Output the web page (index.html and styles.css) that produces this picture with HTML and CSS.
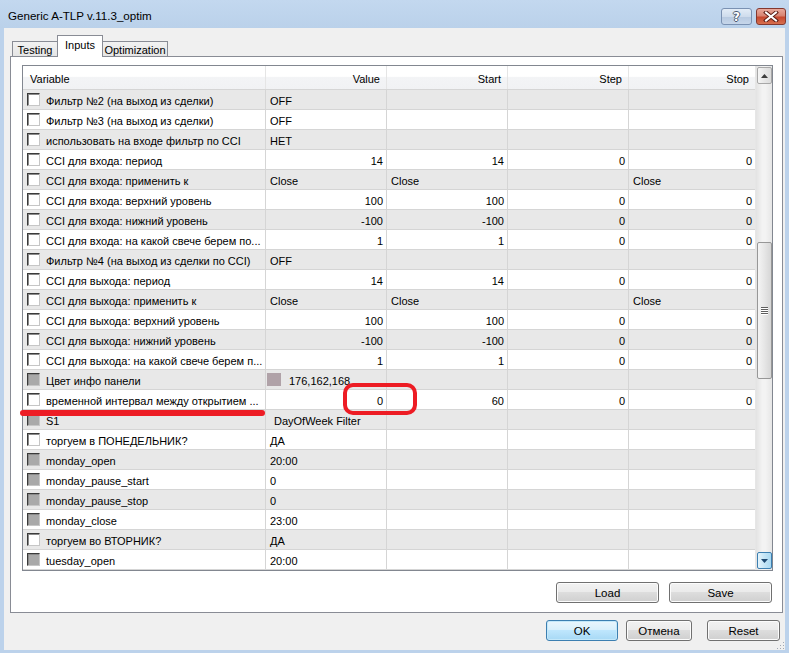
FILE: index.html
```html
<!DOCTYPE html>
<html>
<head>
<meta charset="utf-8">
<link rel="stylesheet" href="styles.css">
</head>
<body>
<div class="window">
  <div class="titlebar">
    <span class="title">Generic A-TLP v.11.3_optim</span>
    <div class="cap-btns">
      <div class="cap help">?</div>
      <div class="cap close">
        <svg width="16" height="11" viewBox="0 0 16 11"><path d="M3 1.5 L13 9.5 M13 1.5 L3 9.5" stroke="#5a1c14" stroke-width="4" stroke-linecap="square"/><path d="M3 1.5 L13 9.5 M13 1.5 L3 9.5" stroke="#fff" stroke-width="2" stroke-linecap="square"/></svg>
      </div>
    </div>
  </div>
  <div class="client">
    <div class="tabs">
      <div class="tab">Testing</div>
      <div class="tab sel">Inputs</div>
      <div class="tab">Optimization</div>
    </div>
    <div class="panel">
      <div class="grid">
        <div class="grid-main">
          <div class="row hdr">
            <div class="c">Variable</div>
            <div class="c n">Value</div>
            <div class="c n">Start</div>
            <div class="c n">Step</div>
            <div class="c n">Stop</div>
          </div>
          <div class="row odd"><div class="c var"><span class="cb"></span>Фильтр №2 (на выход из сделки)</div><div class="c t">OFF</div><div class="c"></div><div class="c"></div><div class="c"></div></div>
          <div class="row"><div class="c var"><span class="cb"></span>Фильтр №3 (на выход из сделки)</div><div class="c t">OFF</div><div class="c"></div><div class="c"></div><div class="c"></div></div>
          <div class="row odd"><div class="c var"><span class="cb"></span>использовать на входе фильтр по CCI</div><div class="c t">НЕТ</div><div class="c"></div><div class="c"></div><div class="c"></div></div>
          <div class="row"><div class="c var"><span class="cb"></span>CCI для входа: период</div><div class="c n">14</div><div class="c n">14</div><div class="c n">0</div><div class="c n">0</div></div>
          <div class="row odd"><div class="c var"><span class="cb"></span>CCI для входа: применить к</div><div class="c t">Close</div><div class="c t">Close</div><div class="c"></div><div class="c t">Close</div></div>
          <div class="row"><div class="c var"><span class="cb"></span>CCI для входа: верхний уровень</div><div class="c n">100</div><div class="c n">100</div><div class="c n">0</div><div class="c n">0</div></div>
          <div class="row odd"><div class="c var"><span class="cb"></span>CCI для входа: нижний уровень</div><div class="c n">-100</div><div class="c n">-100</div><div class="c n">0</div><div class="c n">0</div></div>
          <div class="row"><div class="c var"><span class="cb"></span>CCI для входа: на какой свече берем по...</div><div class="c n">1</div><div class="c n">1</div><div class="c n">0</div><div class="c n">0</div></div>
          <div class="row odd"><div class="c var"><span class="cb"></span>Фильтр №4 (на выход из сделки по CCI)</div><div class="c t">OFF</div><div class="c"></div><div class="c"></div><div class="c"></div></div>
          <div class="row"><div class="c var"><span class="cb"></span>CCI для выхода: период</div><div class="c n">14</div><div class="c n">14</div><div class="c n">0</div><div class="c n">0</div></div>
          <div class="row odd"><div class="c var"><span class="cb"></span>CCI для выхода: применить к</div><div class="c t">Close</div><div class="c t">Close</div><div class="c"></div><div class="c t">Close</div></div>
          <div class="row"><div class="c var"><span class="cb"></span>CCI для выхода: верхний уровень</div><div class="c n">100</div><div class="c n">100</div><div class="c n">0</div><div class="c n">0</div></div>
          <div class="row odd"><div class="c var"><span class="cb"></span>CCI для выхода: нижний уровень</div><div class="c n">-100</div><div class="c n">-100</div><div class="c n">0</div><div class="c n">0</div></div>
          <div class="row"><div class="c var"><span class="cb"></span>CCI для выхода: на какой свече берем п...</div><div class="c n">1</div><div class="c n">1</div><div class="c n">0</div><div class="c n">0</div></div>
          <div class="row odd"><div class="c var"><span class="cb dis"></span>Цвет инфо панели</div><div class="c t sw-cell"><span class="swatch"></span>176,162,168</div><div class="c"></div><div class="c"></div><div class="c"></div></div>
          <div class="row"><div class="c var"><span class="cb"></span>временной интервал между открытием ...</div><div class="c n">0</div><div class="c n">60</div><div class="c n">0</div><div class="c n">0</div></div>
          <div class="row odd"><div class="c var"><span class="cb dis"></span>S1</div><div class="c t wide">DayOfWeek Filter</div><div class="c"></div><div class="c"></div><div class="c"></div></div>
          <div class="row"><div class="c var"><span class="cb"></span>торгуем в ПОНЕДЕЛЬНИК?</div><div class="c t">ДА</div><div class="c"></div><div class="c"></div><div class="c"></div></div>
          <div class="row odd"><div class="c var"><span class="cb dis"></span>monday_open</div><div class="c t">20:00</div><div class="c"></div><div class="c"></div><div class="c"></div></div>
          <div class="row"><div class="c var"><span class="cb dis"></span>monday_pause_start</div><div class="c t">0</div><div class="c"></div><div class="c"></div><div class="c"></div></div>
          <div class="row odd"><div class="c var"><span class="cb dis"></span>monday_pause_stop</div><div class="c t">0</div><div class="c"></div><div class="c"></div><div class="c"></div></div>
          <div class="row"><div class="c var"><span class="cb dis"></span>monday_close</div><div class="c t">23:00</div><div class="c"></div><div class="c"></div><div class="c"></div></div>
          <div class="row odd"><div class="c var"><span class="cb"></span>торгуем во ВТОРНИК?</div><div class="c t">ДА</div><div class="c"></div><div class="c"></div><div class="c"></div></div>
          <div class="row"><div class="c var"><span class="cb dis"></span>tuesday_open</div><div class="c t">20:00</div><div class="c"></div><div class="c"></div><div class="c"></div></div>
        </div>
        <div class="vscroll">
          <div class="sb-btn"><svg width="7" height="4" viewBox="0 0 7 4"><path d="M0 4 L3.5 0 L7 4 Z" fill="#3d3d3d"/></svg></div>
          <div class="thumb"><span class="grip"></span><span class="grip"></span><span class="grip"></span><span class="grip"></span></div>
          <div class="sb-btn down"><svg width="7" height="4" viewBox="0 0 7 4"><path d="M0 0 L7 0 L3.5 4 Z" fill="#1f4a72"/></svg></div>
        </div>
      </div>
      <div class="panel-btns">
        <div class="btn w102">Load</div>
        <div class="btn w102">Save</div>
      </div>
    </div>
    <div class="dlg-btns">
      <div class="btn def ok">OK</div>
      <div class="btn cancel">Отмена</div>
      <div class="btn reset">Reset</div>
    </div>
    <svg class="grip-corner" width="10" height="10" viewBox="0 0 10 10">
      <rect x="8" y="2" width="1" height="1" fill="#a0a8b4"/>
      <rect x="5" y="5" width="1" height="1" fill="#a0a8b4"/>
      <rect x="8" y="5" width="1" height="1" fill="#a0a8b4"/>
      <rect x="2" y="8" width="1" height="1" fill="#a0a8b4"/>
      <rect x="5" y="8" width="1" height="1" fill="#a0a8b4"/>
      <rect x="8" y="8" width="1" height="1" fill="#a0a8b4"/>
    </svg>
  </div>
  <svg class="annot" width="789" height="653" viewBox="0 0 789 653">
    <path d="M23 413 L262 413" stroke="#ed1c24" stroke-width="6" stroke-linecap="round"/>
    <rect x="345" y="385" width="70" height="28" rx="8" ry="8" fill="none" stroke="#ed1c24" stroke-width="4"/>
  </svg>
</div>
</body>
</html>
```

FILE: styles.css
```css
html, body {
  margin: 0;
  padding: 0;
}
body {
  width: 789px;
  height: 653px;
  overflow: hidden;
  background: #bcd2eb;
  font-family: "Liberation Sans", Arial, sans-serif;
  font-size: 11px;
  color: #000;
}
.window {
  position: relative;
  width: 789px;
  height: 653px;
  display: flex;
  flex-direction: column;
}
.titlebar {
  height: 28px;
  flex: none;
  display: flex;
  align-items: center;
  padding-left: 8px;
  padding-right: 3px;
  background: linear-gradient(#c3d8ef, #bad1ea);
}
.title {
  font-size: 11.6px;
  color: #000;
  padding-top: 2px;
}
.cap-btns {
  margin-left: auto;
  display: flex;
  gap: 4px;
  align-self: flex-start;
  margin-top: 8px;
}
.cap {
  height: 15px;
  border-radius: 3px;
  display: flex;
  align-items: center;
  justify-content: center;
  box-sizing: content-box;
}
.help {
  width: 29px;
  border: 1px solid #7a91b2;
  background: linear-gradient(#e2ecf7 0%, #cfdcec 50%, #b7c9e0 51%, #c6d6ea 100%);
  color: #fff;
  font-weight: bold;
  font-size: 12px;
  font-family: "DejaVu Sans", sans-serif;
  text-shadow: -1px 0 #4a5a70, 1px 0 #4a5a70, 0 -1px #4a5a70, 0 1px #4a5a70;
}
.close {
  width: 28px;
  border: 1px solid #84382e;
  background: linear-gradient(#e9a99b 0%, #d88472 45%, #c6482f 55%, #d7704f 100%);
}
.client {
  position: relative;
  flex: 1;
  margin: 0 4px 3px 4px;
  background: #f0f0f0;
  padding: 7px 2px 0 6px;
  display: flex;
  flex-direction: column;
}
.tabs {
  display: flex;
  align-items: flex-end;
  height: 22px;
  padding-left: 2px;
  margin-bottom: -1px;
}
.tab {
  height: 16px;
  box-sizing: border-box;
  border: 1px solid #898c95;
  border-bottom: none;
  background: linear-gradient(#f2f2f2, #e4e4e4);
  display: flex;
  align-items: center;
  justify-content: center;
  font-size: 11px;
  padding-top: 1px;
}
.tab:nth-child(1) { width: 46px; }
.tab:nth-child(2) { width: 46px; margin-left: -1px; }
.tab:nth-child(3) { width: 66px; margin-left: -1px; }
.tab.sel {
  height: 22px;
  background: #fff;
  position: relative;
  z-index: 1;
  padding-top: 0;
  padding-bottom: 3px;
}
.panel {
  width: 773px;
  height: 557px;
  box-sizing: border-box;
  border: 1px solid #898c95;
  background: #fff;
  padding: 8px 10px 0 11px;
}
.grid {
  display: flex;
  width: 751px;
  box-sizing: border-box;
  border: 1px solid #828790;
  background: #fff;
}
.grid-main {
  width: 732px;
}
.row {
  display: grid;
  grid-template-columns: 243px 121px 121px 121px 126px;
  height: 20px;
  box-sizing: border-box;
  border-bottom: 1px solid #d5d5d5;
}
.row.odd {
  background: #e8e8e8;
}
.row.hdr {
  height: 24px;
  background: linear-gradient(#ffffff 0%, #ffffff 45%, #f3f4f6 50%, #f1f2f4 100%);
  border-bottom: 1px solid #d5d5d5;
}
.hdr .c {
  border-right-color: #e5e5e5;
  padding-right: 6px;
  padding-top: 2px;
}
.hdr .c:first-child {
  padding-left: 7px;
}
.c {
  box-sizing: border-box;
  border-right: 1px solid #d5d5d5;
  display: flex;
  align-items: center;
  white-space: nowrap;
  overflow: hidden;
  padding-top: 2px;
}
.c:last-child {
  border-right: none;
}
.c.n {
  justify-content: flex-end;
  padding-right: 3px;
}
.hdr .c.n {
  padding-right: 6px;
}
.c.t {
  padding-left: 4px;
}
.c.wide {
  padding-left: 8px;
}
.c.var {
  padding-left: 4px;
}
.cb {
  width: 13px;
  height: 13px;
  box-sizing: border-box;
  flex: none;
  margin-right: 6px;
  margin-top: -2px;
  background: #fff;
  border: 1px solid;
  border-color: #3a3a3a #c6c6c6 #c6c6c6 #3a3a3a;
  box-shadow: inset 1px 1px 0 #8a8a8a;
}
.cb.dis {
  background: #a9a9a9;
}
.swatch {
  width: 14px;
  height: 13px;
  margin-left: -3px;
  margin-right: 8px;
  margin-top: -2px;
  background: #b0a2a8;
  flex: none;
}
.sw-cell {
  padding-left: 4px;
}
.vscroll {
  width: 17px;
  background: linear-gradient(90deg, #e3e3e3, #f3f3f3 40%, #f3f3f3 60%, #e6e6e6);
  border-left: 1px solid #e6e6e6;
  box-sizing: border-box;
  display: flex;
  flex-direction: column;
  align-items: center;
  padding: 1px 0 1px 0;
}
.sb-btn {
  width: 15px;
  height: 17px;
  box-sizing: border-box;
  border: 1px solid #a8a8a8;
  border-radius: 2px;
  background: linear-gradient(90deg, #f6f6f6, #e7e7e7 50%, #dcdcdc);
  display: flex;
  align-items: center;
  justify-content: center;
  flex: none;
}
.sb-btn.down {
  margin-top: auto;
  border-color: #3c7fb1;
  background: linear-gradient(90deg, #e4f4fc, #c4e5f6 50%, #a9d9f2);
}
.thumb {
  width: 15px;
  height: 137px;
  margin-top: 158px;
  box-sizing: border-box;
  border: 1px solid #979797;
  border-radius: 2px;
  background: linear-gradient(90deg, #f4f4f4, #e6e6e6 50%, #d6d6d6);
  display: flex;
  flex-direction: column;
  align-items: center;
  justify-content: center;
  gap: 1px;
}
.grip {
  width: 7px;
  height: 1px;
  background: #5e5e5e;
  border-bottom: 1px solid #fff;
  margin-top: -1px;
}
.grip:first-child { margin-top: 0; }
.panel-btns {
  display: flex;
  justify-content: flex-end;
  gap: 10px;
  margin-top: 11px;
}
.btn {
  height: 21px;
  box-sizing: border-box;
  border: 1px solid #707070;
  border-radius: 3px;
  background: linear-gradient(#f2f2f2 0%, #ebebeb 45%, #dddddd 50%, #cfcfcf 100%);
  box-shadow: inset 0 0 0 1px #fcfcfc;
  display: flex;
  align-items: center;
  justify-content: center;
  font-size: 11.5px;
  padding-top: 1px;
}
.w102 { width: 103px; }
.dlg-btns {
  display: flex;
  justify-content: flex-end;
  margin-top: 7px;
  padding-right: 3px;
}
.btn.def {
  border-color: #3c7fb1;
  background: linear-gradient(#eaf6fd 0%, #d9f0fc 45%, #bee6fd 50%, #a7d9f5 100%);
  box-shadow: inset 0 0 0 1px #c4e8fa;
}
.ok { width: 72px; }
.cancel { width: 66px; margin-left: 8px; }
.reset { width: 73px; margin-left: 15px; }
.grip-corner {
  position: absolute;
  right: 0;
  bottom: 0;
}
.annot {
  position: absolute;
  left: 0;
  top: 0;
  pointer-events: none;
}
```
